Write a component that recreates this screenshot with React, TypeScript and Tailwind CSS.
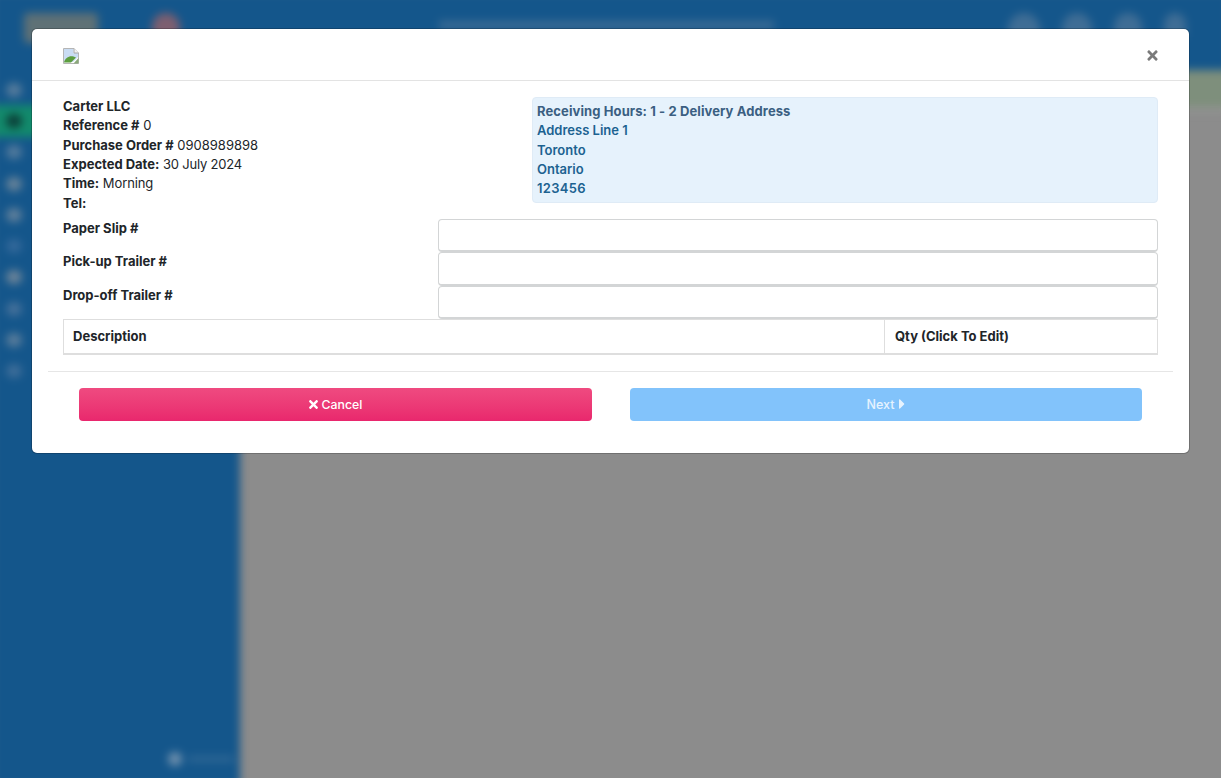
import { FaCaretRight, FaTimes } from "react-icons/fa";

const sideItems = [
  { active: false, color: "bg-[#567c9c]" },
  { active: true, color: "bg-[#0b3f38]" },
  { active: false, color: "bg-[#527a9c]" },
  { active: false, color: "bg-[#668299]" },
  { active: false, color: "bg-[#5f7f9b]" },
  { active: false, color: "bg-[#33689a]" },
  { active: false, color: "bg-[#6c8499]" },
  { active: false, color: "bg-[#44709a]" },
  { active: false, color: "bg-[#587c9b]" },
  { active: false, color: "bg-[#3d6d99]" },
];

function BrokenImage() {
  return (
    <svg width="16" height="16" viewBox="0 0 16 16" className="block">
      <path d="M0.5 0.5H11L15.5 5V15.5H0.5Z" fill="#fff" stroke="#b5b5b5" />
      <path d="M1 1H10.5V5H15V9L10 14H1Z" fill="#c9dcf3" />
      <path d="M1 14.5C2 10 6 7.5 10.5 8.5L13 9.5L8 14.5Z" fill="#5c9e3f" />
      <path d="M11 0.5V5H15.5" fill="#f2f2f2" stroke="#a8a8a8" />
      <path d="M15.5 10L10.5 15.5H15.5Z" fill="#8aa87a" />
    </svg>
  );
}

function Field({ label }: { label: string }) {
  return (
    <div className="flex items-start">
      <label className="w-[375px] shrink-0 font-bold">{label}</label>
      <div className="h-[33.33px] flex-1 rounded-[4px] border border-b-2 border-[#d3d5d6] bg-white" />
    </div>
  );
}

export default function App() {
  return (
    <div className="relative h-[778px] w-[1221px] overflow-hidden bg-[#8c8c8c] font-['Inter',sans-serif]">
      {/* blurred page behind the overlay, bleeds past the window so edges stay solid */}
      <div className="absolute -inset-[8px] flex flex-col blur-[4px]">
        <header className="flex h-[78px] shrink-0 items-start bg-[#14568b] pl-[32px] pt-[21px]">
          <div className="h-[30px] w-[74px] rounded-sm bg-[#5f7176]" />
          <div className="ml-[54px] h-[30px] w-[28px] rounded-full bg-[#7d5f70]" />
          <div className="ml-[259px] mt-[8px] h-[8px] w-[335px] bg-[#3c6b94]" />
          <div className="ml-[234px] flex gap-[22px]">
            <div className="h-[24px] w-[32px] rounded-t-full bg-[#3f6d95]" />
            <div className="h-[24px] w-[30px] rounded-t-full bg-[#3f6d95]" />
            <div className="h-[24px] w-[28px] rounded-t-full bg-[#3f6d95]" />
            <div className="h-[24px] w-[22px] rounded-t-full bg-[#3f6d95]" />
          </div>
        </header>
        <div className="flex min-h-0 flex-1">
          <aside className="flex w-[248px] shrink-0 flex-col bg-[#14568b]">
            <nav className="flex flex-col pt-[4px]">
              {sideItems.map((item, i) => (
                <div key={i} className={`flex h-[31.3px] items-center pl-[14px] ${item.active ? "bg-[#128a6c]" : ""}`}>
                  <div className={`h-[14px] w-[16px] rounded-full ${item.color}`} />
                </div>
              ))}
            </nav>
            <div className="mt-auto mb-[20px] flex items-center pl-[176px]">
              <div className="h-[14px] w-[14px] rounded-full bg-[#6f90ad]" />
              <div className="ml-[6px] h-[6px] w-[46px] bg-[#2f6795]" />
            </div>
          </aside>
          <main className="flex-1">
            <div className="h-[37px] bg-[#7e8f7c]" />
            <div className="h-[5px] bg-[#949494]" />
          </main>
        </div>
      </div>

      {/* modal */}
      <div className="absolute left-[32px] top-[29px] flex h-[424px] w-[1157px] flex-col rounded-[5px] bg-white text-[13px] leading-[19.33px] text-[#212529] shadow-[0_0_0_1px_rgba(0,0,0,0.2)]">
        <div className="flex h-[52px] shrink-0 items-center justify-between border-b border-[#e3e3e3] px-[31px] pt-[2px]">
          <BrokenImage />
          <FaTimes size={15} className="mr-[-2px] text-[#7a7a7a]" />
        </div>

        <div className="px-[31px] pt-[16px]">
          <div className="flex items-start justify-between">
            <div>
              <div className="font-bold">Carter LLC</div>
              <div><span className="font-bold">Reference #</span> 0</div>
              <div><span className="font-bold">Purchase Order #</span> 0908989898</div>
              <div><span className="font-bold">Expected Date:</span> <span className="tracking-[-0.2px]">30 July 2024</span></div>
              <div><span className="font-bold">Time:</span> <span className="tracking-[-0.1px]">Morning</span></div>
              <div className="font-bold">Tel:</div>
            </div>
            <div className="h-[106px] w-[626px] rounded-[4px] border border-[#dfebf6] bg-[#e6f2fc] px-[4px] py-[4px] font-semibold text-[#1c6291]">
              <div className="font-bold tracking-[0.1px] text-[#3b5f82]">Receiving Hours: 1 - 2 Delivery Address</div>
              <div>Address Line 1</div>
              <div>Toronto</div>
              <div>Ontario</div>
              <div className="tracking-[0.3px]">123456</div>
            </div>
          </div>

          <div className="mt-[6px] flex flex-col">
            <Field label="Paper Slip #" />
            <Field label="Pick-up Trailer #" />
            <Field label="Drop-off Trailer #" />
          </div>

          <div className="flex h-[36px] border border-b-2 border-[#dedede]">
            <div className="flex flex-1 items-center border-r border-[#dedede] pl-[9px] font-bold">Description</div>
            <div className="flex w-[272px] items-center pl-[10px] font-bold">Qty (Click To Edit)</div>
          </div>
        </div>

        <div className="mx-[16px] mt-[16px] border-t border-[#e6e6e6]" />

        <div className="mt-[16px] flex justify-between px-[47px]">
          <button className="flex h-[33px] w-[513px] items-center justify-center gap-[3px] rounded-[4px] bg-gradient-to-b from-[#ef4a80] to-[#e9276d] text-[12.3px] font-medium text-white">
            <FaTimes size={13} className="-ml-[2px] -mr-[1px]" /> Cancel
          </button>
          <button className="flex h-[33px] w-[512px] items-center justify-center gap-[5px] rounded-[4px] bg-[#82c3fb] text-[12.5px] font-medium text-white/80">
            Next
            <FaCaretRight size={16} className="-mx-[5px]" />
          </button>
        </div>
      </div>
    </div>
  );
}
